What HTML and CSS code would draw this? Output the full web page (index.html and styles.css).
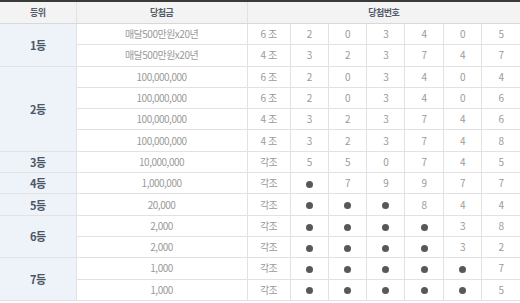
FILE: index.html
```html
<!DOCTYPE html>
<html lang="ko">
<head>
    <meta charset="UTF-8">
    <title>당첨번호</title>
    <link rel="stylesheet" href="styles.css">
</head>
<body>
    <table class="prize-table">
        <colgroup>
            <col class="c-rank">
            <col class="c-amount">
            <col class="c-set">
            <col class="c-num"><col class="c-num"><col class="c-num">
            <col class="c-num"><col class="c-num"><col class="c-num">
        </colgroup>
        <thead>
            <tr>
                <th>등위</th>
                <th>당첨금</th>
                <th colspan="7">당첨번호</th>
            </tr>
        </thead>
        <tbody>
            <tr>
                <td class="rank" rowspan="2">1등</td>
                <td>매달500만원x20년</td>
                <td>6 조</td><td>2</td><td>0</td><td>3</td><td>4</td><td>0</td><td>5</td>
            </tr>
            <tr>
                <td>매달500만원x20년</td>
                <td>4 조</td><td>3</td><td>2</td><td>3</td><td>7</td><td>4</td><td>7</td>
            </tr>
            <tr>
                <td class="rank" rowspan="4">2등</td>
                <td>100,000,000</td>
                <td>6 조</td><td>2</td><td>0</td><td>3</td><td>4</td><td>0</td><td>4</td>
            </tr>
            <tr>
                <td>100,000,000</td>
                <td>6 조</td><td>2</td><td>0</td><td>3</td><td>4</td><td>0</td><td>6</td>
            </tr>
            <tr>
                <td>100,000,000</td>
                <td>4 조</td><td>3</td><td>2</td><td>3</td><td>7</td><td>4</td><td>6</td>
            </tr>
            <tr>
                <td>100,000,000</td>
                <td>4 조</td><td>3</td><td>2</td><td>3</td><td>7</td><td>4</td><td>8</td>
            </tr>
            <tr>
                <td class="rank">3등</td>
                <td>10,000,000</td>
                <td>각조</td><td>5</td><td>5</td><td>0</td><td>7</td><td>4</td><td>5</td>
            </tr>
            <tr>
                <td class="rank">4등</td>
                <td>1,000,000</td>
                <td>각조</td><td><span class="dot"></span></td><td>7</td><td>9</td><td>9</td><td>7</td><td>7</td>
            </tr>
            <tr>
                <td class="rank">5등</td>
                <td>20,000</td>
                <td>각조</td><td><span class="dot"></span></td><td><span class="dot"></span></td><td><span class="dot"></span></td><td>8</td><td>4</td><td>4</td>
            </tr>
            <tr>
                <td class="rank" rowspan="2">6등</td>
                <td>2,000</td>
                <td>각조</td><td><span class="dot"></span></td><td><span class="dot"></span></td><td><span class="dot"></span></td><td><span class="dot"></span></td><td>3</td><td>8</td>
            </tr>
            <tr>
                <td>2,000</td>
                <td>각조</td><td><span class="dot"></span></td><td><span class="dot"></span></td><td><span class="dot"></span></td><td><span class="dot"></span></td><td>3</td><td>2</td>
            </tr>
            <tr>
                <td class="rank" rowspan="2">7등</td>
                <td>1,000</td>
                <td>각조</td><td><span class="dot"></span></td><td><span class="dot"></span></td><td><span class="dot"></span></td><td><span class="dot"></span></td><td><span class="dot"></span></td><td>7</td>
            </tr>
            <tr>
                <td>1,000</td>
                <td>각조</td><td><span class="dot"></span></td><td><span class="dot"></span></td><td><span class="dot"></span></td><td><span class="dot"></span></td><td><span class="dot"></span></td><td>5</td>
            </tr>
        </tbody>
    </table>
</body>
</html>
```

FILE: styles.css
```css
body {
    margin: 0;
    background-color: white;
    font-family: "Noto Sans CJK KR", "Noto Sans", sans-serif;
}
.prize-table {
    width: 520px;
    border-collapse: collapse;
    table-layout: fixed;
    border-top: 2px solid #3a3a3a;
    border-bottom: 1px solid #cfcfcf;
}
.c-rank {
    width: 76px;
}
.c-amount {
    width: 171px;
}
.c-set {
    width: 43px;
}
.c-num {
    width: 38.3px;
}
th, td {
    padding: 0;
    text-align: center;
    border: 1px solid #e2e2e2;
    font-size: 10px;
    letter-spacing: -0.5px;
    color: #9a9a9a;
    line-height: 12px;
}
th:first-child, td:first-child {
    border-left: none;
}
th:last-child, td:last-child {
    border-right: none;
}
th {
    height: 21px;
    background-color: #f3f3f3;
    color: #535c6a;
    font-size: 9px;
    font-weight: bold;
    border-bottom-color: #d8d8d8;
}
tbody tr {
    height: 21.3px;
}
td.rank {
    background-color: #eef3fa;
    color: #4c5563;
    font-weight: bold;
    font-size: 11px;
    border-left: none;
}
.dot {
    display: inline-block;
    width: 7px;
    height: 7px;
    border-radius: 50%;
    background-color: #585858;
    vertical-align: middle;
}
```
